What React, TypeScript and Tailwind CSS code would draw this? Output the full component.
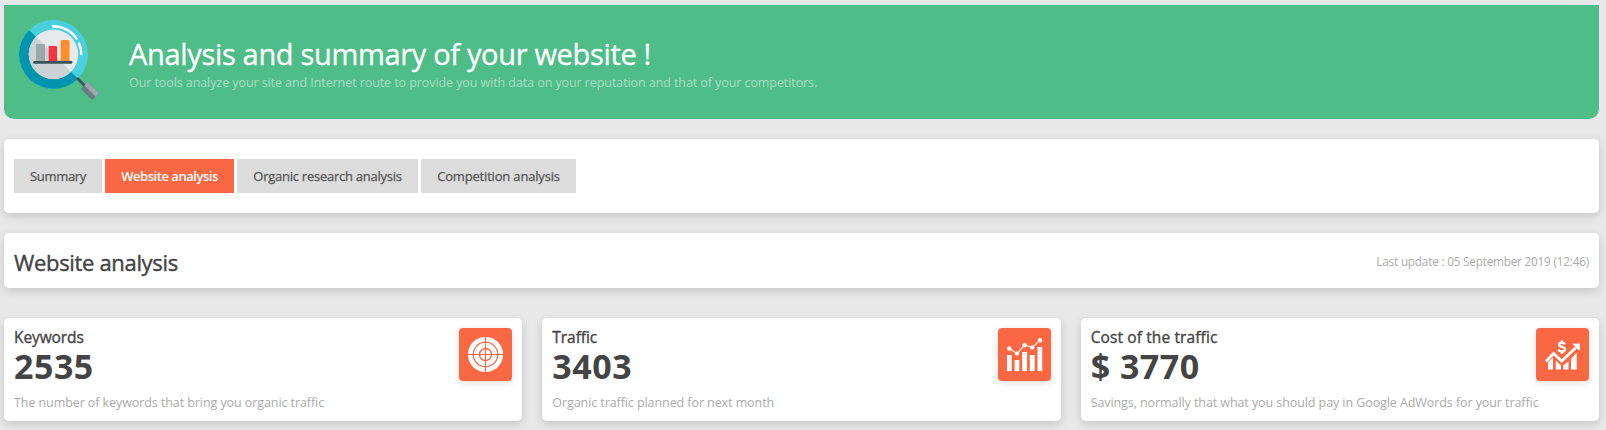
import type { ReactNode } from "react";

function AnalysisLogo() {
  return (
    <svg width="84" height="84" viewBox="17 18 84 84" className="shrink-0">
      <circle cx="53.5" cy="54.3" r="34.5" fill="#4bcfdc" />
      <path d="M29.1 29.9A34.5 34.5 0 1 0 77.9 78.7Z" fill="#0095af" />
      <path d="M77 78l8 8" stroke="#38545a" strokeWidth="2.6" />
      <g transform="rotate(45 90 91)">
        <rect x="82" y="86" width="16" height="10" rx="1" fill="#697c80" />
        <path d="M82 91v-4a1 1 0 0 1 1-1h14a1 1 0 0 1 1 1V91z" fill="#99a9aa" />
      </g>
      <circle cx="53.5" cy="54.3" r="24.7" fill="#e6eaeb" />
      <path d="M36 36.8A24.7 24.7 0 1 0 71 71.8Z" fill="#cbd2d4" />
      <rect x="36" y="44" width="9" height="18" rx="1.3" fill="#99a9aa" />
      <rect x="48.7" y="46" width="8.4" height="16" rx="1.3" fill="#f2353f" />
      <rect x="60.7" y="40" width="8.8" height="22" rx="1.3" fill="#ff8d2b" />
      <path d="M34.5 62.4H71" stroke="#38545a" strokeWidth="2.8" strokeLinecap="round" />
      <path d="M52 26.3a28 28 0 0 1 25 13" fill="none" stroke="#fff" strokeWidth="2.4" />
      <path d="M78.8 42.5a28 28 0 0 1 2.4 12.5" fill="none" stroke="#fff" strokeWidth="2.4" />
    </svg>
  );
}

function TargetIcon() {
  return (
    <svg width="53" height="53" viewBox="0 0 53 53">
      <circle cx="26.5" cy="26.5" r="17.6" fill="#fff" />
      <g fill="none" stroke="#f96743">
        <circle cx="26.5" cy="26.5" r="12.3" strokeWidth="1.2" />
        <circle cx="26.5" cy="26.5" r="6" strokeWidth="1.4" />
        <path d="M26.5 8v37M8 26.5h37" strokeWidth="1.1" />
      </g>
    </svg>
  );
}

function TrafficIcon() {
  return (
    <svg width="53" height="53" viewBox="0 0 53 53" fill="#fff">
      <path d="M9 27h4.7v16H9zM16.6 32h4.7v11h-4.7zM24.2 24h4.9v19h-4.9zM31.8 27h4.9v16h-4.9zM39.5 19h4.7v24h-4.7z" />
      <path d="M11.3 20.5l7.7 5 7.7-8.5 7.6 2.5 7.8-7.3" fill="none" stroke="#fff" strokeWidth="1.1" />
      <circle cx="11.3" cy="20.5" r="2.2" />
      <circle cx="19" cy="25.6" r="2.1" />
      <circle cx="26.6" cy="17.2" r="2.2" />
      <circle cx="34.3" cy="19.6" r="2.1" />
      <circle cx="42" cy="12.3" r="2.2" />
    </svg>
  );
}

function CostIcon() {
  return (
    <svg width="53" height="53" viewBox="0 0 53 53" fill="#fff">
      <path d="M12 34.5l5-5.3v12.3h-5zM19.8 32.5l5.2 5v4h-5.2zM27.3 37.5l5.2-4.2v8.2h-5.2zM35 31l5.7-6.5v17H35z" />
      <path d="M9.9 33.5L17.5 25.5l8.2 7.6L40 19.5" fill="none" stroke="#fff" strokeWidth="2.7" />
      <path d="M36.3 15.8l7.7-.4-.3 7.7z" />
      <path d="M28.8 16.4c-.5-1.2-1.5-1.7-2.9-1.7-1.8 0-2.7.8-2.7 2 0 2.7 5.8 1.5 5.8 4.5 0 1.5-1.2 2.2-3 2.2s-3-.7-3.4-2.1M26 12.2v2.3M26 23.5v2.6" fill="none" stroke="#fff" strokeWidth="2.4" />
    </svg>
  );
}

const tabs = [
  { label: "Summary", style: "w-[88px] bg-[#dcdcdc] text-[#555] [-webkit-text-stroke:0.25px] tracking-[-0.3px]" },
  { label: "Website analysis", style: "w-[129px] bg-[#f96743] text-white font-semibold tracking-[-0.47px]" },
  { label: "Organic research analysis", style: "w-[181px] bg-[#dcdcdc] text-[#555] [-webkit-text-stroke:0.25px] tracking-[-0.25px]" },
  { label: "Competition analysis", style: "w-[155px] bg-[#dcdcdc] text-[#555] [-webkit-text-stroke:0.25px] tracking-[-0.18px]" },
];

const stats: { title: string; value: string; note: string; icon: ReactNode; titleStyle: string }[] = [
  {
    title: "Keywords",
    value: "2535",
    note: "The number of keywords that bring you organic traffic",
    icon: <TargetIcon />,
    titleStyle: "tracking-[-0.1px]",
  },
  {
    title: "Traffic",
    value: "3403",
    note: "Organic traffic planned for next month",
    icon: <TrafficIcon />,
    titleStyle: "tracking-[-0.05px]",
  },
  {
    title: "Cost of the traffic",
    value: "$ 3770",
    note: "Savings, normally that what you should pay in Google AdWords for your traffic",
    icon: <CostIcon />,
    titleStyle: "tracking-[0.12px]",
  },
];

const card = "rounded-[5px] bg-white shadow-[0_3px_10px_rgba(0,0,0,0.15)]";

export default function App() {
  return (
    <div className="h-[430px] overflow-hidden bg-[#e8e8e8] pt-[5px] pr-[7px] pl-1 font-['Open_Sans','Noto_Sans',sans-serif] whitespace-nowrap text-[#444]">
      <header className="flex h-[114px] rounded-b-[10px] bg-[#4ebd87] pt-[13px] pl-[13px]">
        <AnalysisLogo />
        <div className="pt-4 pl-7">
          <h1 className="text-[29px] leading-[40px] tracking-[-0.33px] text-white [-webkit-text-stroke:0.3px]">Analysis and summary of your website !</h1>
          <p className="text-[12.5px] leading-[17px] tracking-[-0.08px] text-white/50">
            Our tools analyze your site and Internet route to provide you with data on your reputation and that of your competitors.
          </p>
        </div>
      </header>

      <nav className={`mt-5 flex h-[74px] items-center gap-[3px] px-2.5 ${card}`}>
        {tabs.map((t) => (
          <button key={t.label} className={`h-[34px] pt-px text-center text-[13px] ${t.style}`}>
            {t.label}
          </button>
        ))}
      </nav>

      <section className={`mt-5 flex h-[55px] items-center justify-between px-2.5 ${card}`}>
        <h2 className="pt-0.5 text-[22px] leading-[30px] tracking-[-0.33px] [-webkit-text-stroke:0.4px]">Website analysis</h2>
        <span className="pt-[3px] text-[11.7px] tracking-[-0.17px] text-[#aaa]">Last update : 05 September 2019 (12:46)</span>
      </section>

      <main className="mt-[30px] grid grid-cols-3 gap-5">
        {stats.map((s) => (
          <article key={s.title} className={`flex h-[103px] justify-between p-2.5 ${card}`}>
            <div>
              <h3 className={`text-[15.5px] leading-[19px] [-webkit-text-stroke:0.35px] ${s.titleStyle}`}>{s.title}</h3>
              <p className="text-[34px] leading-[38px] font-bold tracking-[0.5px]">{s.value}</p>
              <p className="mt-2 text-[12.5px] leading-[20px] tracking-[-0.08px] text-[#aaa]">{s.note}</p>
            </div>
            <div className="-ml-14 size-[53px] shrink-0 rounded-[4px] bg-[#f96743] shadow-[0_2px_8px_rgba(0,0,0,0.12)]">{s.icon}</div>
          </article>
        ))}
      </main>
    </div>
  );
}
